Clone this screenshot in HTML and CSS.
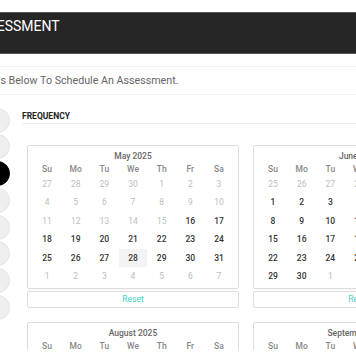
FILE: index.html
```html
<!DOCTYPE html>
<html>
  <head>
    <title>Schedule Assessment</title>
    <link rel="stylesheet" href="styles.css">
  </head>
  <body>
    <div class="page">
      <header class="topbar">
        <h1>Assessment</h1>
      </header>
      <p class="intro">Fill In The Details Below To Schedule An Assessment.</p>
      <main class="booking">
        <ol class="steps">
          <li></li>
          <li></li>
          <li class="active"></li>
          <li></li>
          <li></li>
          <li></li>
          <li></li>
          <li></li>
        </ol>
        <section class="form">
          <h2 class="label">Frequency</h2>
          <div class="months" id="months"></div>
        </section>
      </main>
    </div>
    <script src="script.js"></script>
  </body>
</html>
```

FILE: styles.css
```css
* {
  box-sizing: border-box;
}

body {
  margin: 0;
  overflow: hidden;
  background-color: #fff;
  font-family: Roboto, "Liberation Sans", sans-serif;
}

.page {
  width: 700px;
  margin-left: -100px;
  padding-top: 12px;
}

.topbar {
  height: 42px;
  padding: 5px 0 0 71px;
  background-color: #262626;
  border-top: 1px solid #555;
  border-bottom: 1px solid #555;
}

.topbar h1 {
  margin: 0;
  font-size: 14px;
  font-weight: 400;
  line-height: 16px;
  text-transform: uppercase;
  color: #fff;
}

.intro {
  margin: 12px 0 0;
  padding: 1px 0 0 25px;
  height: 29px;
  line-height: 26px;
  font-size: 10.7px;
  color: #666;
  border-top: 1px solid #f1f1f1;
  border-bottom: 1px solid #f1f1f1;
}

.booking {
  display: flex;
  gap: 12px;
  height: 255px;
  overflow: hidden;
  padding-left: 85px;
}

.steps {
  list-style: none;
  margin: 0;
  padding: 12.5px 0 0;
  display: flex;
  flex-direction: column;
  gap: 1.8px;
}

.steps li {
  width: 25px;
  height: 25px;
  border-radius: 50%;
  background-color: #efefef;
  border: 1px solid #e3e3e3;
}

.steps li.active {
  background-color: #000;
  border-color: #000;
}

.form {
  flex: 1;
  padding-top: 14.5px;
}

.label {
  margin: 0;
  padding-bottom: 1px;
  font-size: 8.5px;
  font-weight: 700;
  line-height: 12px;
  text-transform: uppercase;
  color: #222;
  border-bottom: 1px solid #eee;
}

.months {
  display: grid;
  grid-template-columns: repeat(3, 212px);
  gap: 14px;
  margin-top: 21.5px;
  padding-left: 5px;
}

.card {
  display: flex;
  flex-direction: column;
  gap: 2px;
}

.calendar {
  padding: 4px 4.7px 3px;
  border: 1px solid #ddd;
  border-radius: 2px;
  box-shadow: 0 1px 1px rgba(0, 0, 0, 0.04);
}

.cal-title {
  margin-bottom: 1px;
  font-size: 8.5px;
  font-weight: 500;
  line-height: 12px;
  text-align: center;
  color: #666;
}

.cal-grid {
  display: grid;
  grid-template-columns: repeat(7, 1fr);
  grid-template-rows: 12px;
  grid-auto-rows: 18.4px;
  font-size: 8.5px;
  text-align: center;
}

.weekday {
  line-height: 12px;
  font-weight: 500;
  color: #888;
}

.day {
  line-height: 18.4px;
  color: #bdbdbd;
}

.day.on {
  font-weight: 500;
  color: #333;
}

.day.marked {
  background-color: #f3f3f3;
}

.reset {
  height: 17px;
  line-height: 15px;
  font-size: 8.5px;
  text-align: center;
  color: #3fd0c0;
  border: 1px solid #ddd;
  border-radius: 2px;
}
```

FILE: script.js
```js
const months = document.getElementById('months');
const weekdays = ['Su', 'Mo', 'Tu', 'We', 'Th', 'Fr', 'Sa'];
const names = [
  'January', 'February', 'March', 'April', 'May', 'June',
  'July', 'August', 'September', 'October', 'November', 'December'
];
const minDate = new Date(2025, 4, 16);
const marked = new Date(2025, 4, 28);

function buildMonth(year, month) {
  const card = document.createElement('div');
  card.className = 'card';

  const cal = document.createElement('div');
  cal.className = 'calendar';

  const title = document.createElement('div');
  title.className = 'cal-title';
  title.textContent = names[month] + ' ' + year;
  cal.appendChild(title);

  const grid = document.createElement('div');
  grid.className = 'cal-grid';
  weekdays.forEach((w) => {
    const el = document.createElement('span');
    el.className = 'weekday';
    el.textContent = w;
    grid.appendChild(el);
  });

  // always 6 rows, a full week of the previous month if the 1st is a Sunday
  const first = new Date(year, month, 1).getDay();
  const lead = first === 0 ? 7 : first;
  for (let i = 0; i < 42; i++) {
    const date = new Date(year, month, 1 - lead + i);
    const inMonth = date.getMonth() === month;
    const el = document.createElement('span');
    el.className = 'day';
    if (inMonth && date >= minDate) {
      el.classList.add('on');
    }
    if (inMonth && date.getTime() === marked.getTime()) {
      el.classList.add('marked');
    }
    el.textContent = date.getDate();
    grid.appendChild(el);
  }
  cal.appendChild(grid);
  card.appendChild(cal);

  const reset = document.createElement('div');
  reset.className = 'reset';
  reset.textContent = 'Reset';
  card.appendChild(reset);

  months.appendChild(card);
}

for (let m = 4; m < 10; m++) {
  buildMonth(2025, m);
}
```
